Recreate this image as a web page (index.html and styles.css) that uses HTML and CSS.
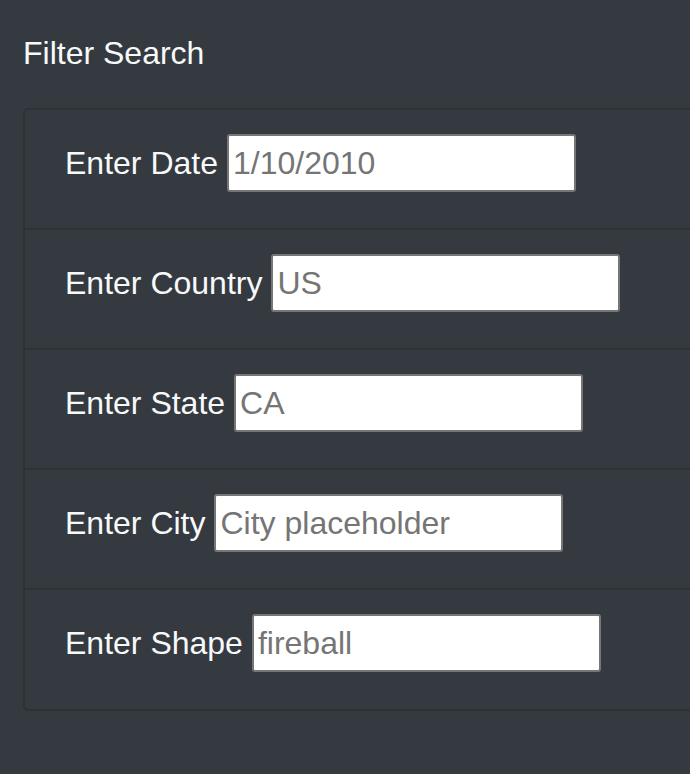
FILE: index.html
```html
<!DOCTYPE html>
<html lang="en">
<head>
<meta charset="utf-8">
<title>Filter Search</title>
<link rel="stylesheet" href="styles.css">
</head>
<body>
<main class="page">
  <h5 class="title">Filter Search</h5>
  <ul class="filters">
    <li class="filter">
      <label class="filter-label" for="date">Enter Date</label>
      <input class="filter-input" id="date" type="text" placeholder="1/10/2010">
    </li>
    <li class="filter">
      <label class="filter-label" for="country">Enter Country</label>
      <input class="filter-input" id="country" type="text" placeholder="US">
    </li>
    <li class="filter">
      <label class="filter-label" for="state">Enter State</label>
      <input class="filter-input" id="state" type="text" placeholder="CA">
    </li>
    <li class="filter">
      <label class="filter-label" for="city">Enter City</label>
      <input class="filter-input" id="city" type="text" placeholder="City placeholder">
    </li>
    <li class="filter">
      <label class="filter-label" for="shape">Enter Shape</label>
      <input class="filter-input" id="shape" type="text" placeholder="fireball">
    </li>
  </ul>
</main>
</body>
</html>
```

FILE: styles.css
```css
html, body {
  margin: 0;
  padding: 0;
  background: #343a40;
  overflow: hidden;
}

body {
  font-family: "Liberation Sans", Arial, sans-serif;
  color: #ffffff;
}

.page {
  padding: 34px 0 0 23px;
}

.title {
  margin: 0;
  font-size: 32px;
  line-height: 38px;
  font-weight: 400;
  color: #f8f9fa;
}

.filters {
  list-style: none;
  margin: 36px -20px 0 0;
  padding: 0;
  border: 2px solid #2d3237;
  border-radius: 5px;
}

.filter {
  display: flex;
  align-items: baseline;
  gap: 9px;
  height: 120px;
  box-sizing: border-box;
  padding: 24px 0 0 40px;
  border-bottom: 2px solid #2d3237;
}

.filter:last-child {
  border-bottom: 0;
  height: 119px;
}

.filter-label {
  font-size: 32px;
  line-height: 38px;
  color: #f8f9fa;
}

.filter-input {
  width: 349px;
  height: 58px;
  box-sizing: border-box;
  margin: 0;
  padding: 0 4px;
  border: 2px solid #767676;
  border-radius: 3px;
  background: #ffffff;
  font-family: "Liberation Sans", Arial, sans-serif;
  font-size: 32px;
  color: #757575;
  outline: none;
}

.filter-input::placeholder {
  color: #757575;
  opacity: 1;
}
```
